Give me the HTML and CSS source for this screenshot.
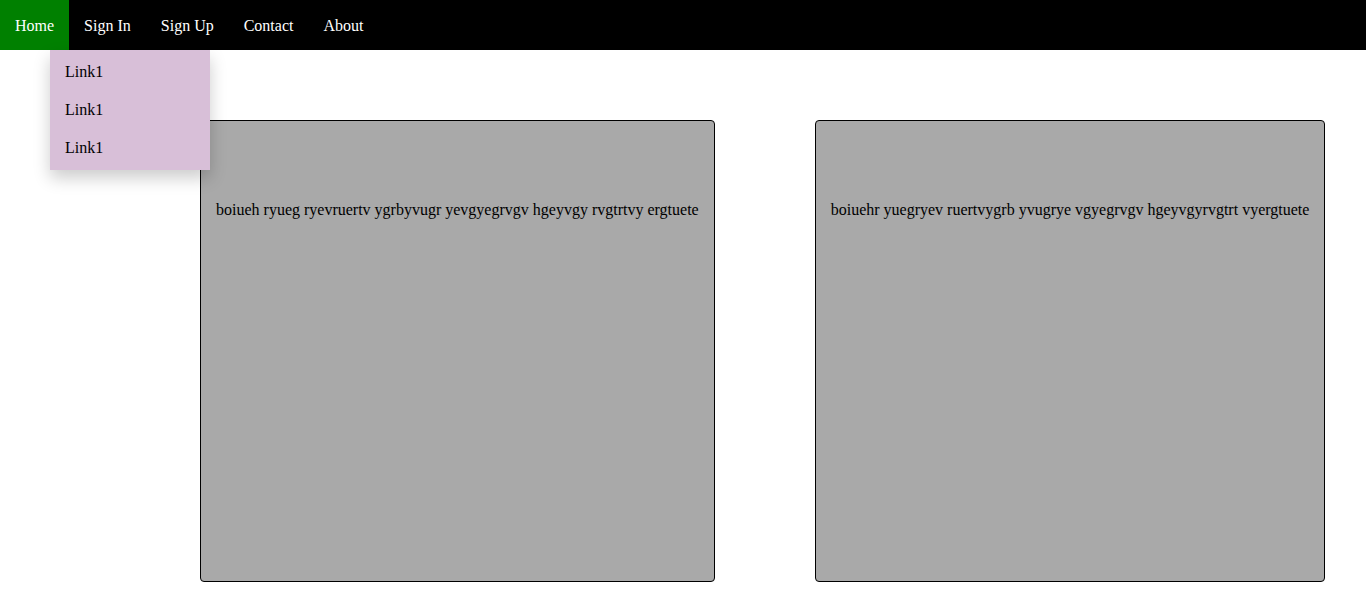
FILE: index.html
```html
<!DOCTYPE html>
<html>
<head>
<meta charset="utf-8">
<link rel="stylesheet" href="styles.css">
</head>
<body>
<nav class="navbar">
  <a class="nav-link active" href="#">Home</a>
  <a class="nav-link" href="#">Sign In</a>
  <a class="nav-link" href="#">Sign Up</a>
  <a class="nav-link" href="#">Contact</a>
  <a class="nav-link" href="#">About</a>
  <div class="dropdown">
    <a class="drop-link" href="#">Link1</a>
    <a class="drop-link" href="#">Link1</a>
    <a class="drop-link" href="#">Link1</a>
  </div>
</nav>
<main class="content">
  <div class="box">boiueh ryueg ryevruertv ygrbyvugr yevgyegrvgv hgeyvgy rvgtrtvy ergtuete</div>
  <div class="box">boiuehr yuegryev ruertvygrb yvugrye vgyegrvgv hgeyvgyrvgtrt vyergtuete</div>
</main>
</body>
</html>
```

FILE: styles.css
```css
* { box-sizing: border-box; }
body {
  margin: 0;
  font-family: "Liberation Serif", "Times New Roman", serif;
  font-size: 16px;
  color: #000;
  background: #fff;
}
.navbar {
  position: relative;
  display: flex;
  height: 50px;
  background: #000;
}
.nav-link {
  display: flex;
  align-items: center;
  padding: 2px 15px 0;
  color: #fff;
  text-decoration: none;
}
.nav-link.active { background: #008000; }
.dropdown {
  position: absolute;
  left: 50px;
  top: 50px;
  width: 160px;
  height: 120px;
  display: flex;
  flex-direction: column;
  padding-top: 3px;
  background: #d8bfd8;
  box-shadow: 0 8px 16px rgba(0, 0, 0, 0.2);
  z-index: 2;
}
.drop-link {
  height: 38px;
  display: flex;
  align-items: center;
  padding: 0 15px;
  color: #000;
  text-decoration: none;
}
.content {
  display: flex;
  gap: 100px;
  padding: 70px 0 0 200px;
}
.box {
  height: 462px;
  padding: 80px 15px 0;
  background: #a9a9a9;
  border: 1px solid #000;
  border-radius: 4px;
  white-space: nowrap;
}
```
